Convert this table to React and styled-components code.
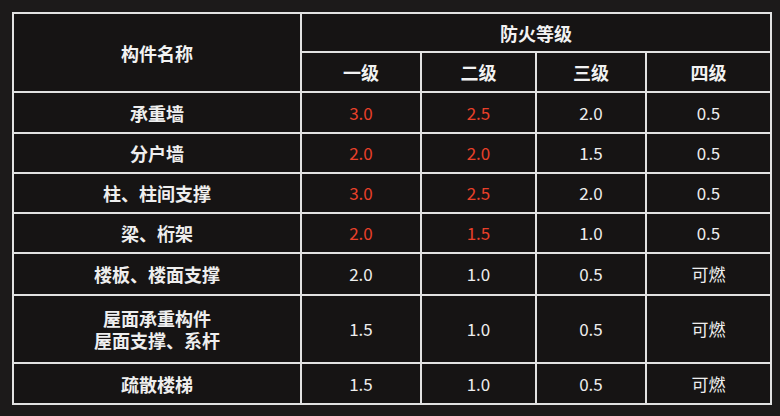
import React from "react";
import styled, { createGlobalStyle } from "styled-components";

const GlobalStyle = createGlobalStyle`
  html, body {
    margin: 0;
    padding: 0;
    background: #1c1a1a;
  }
  body {
    font-family: "Noto Sans CJK SC", "Noto Sans", sans-serif;
    color: #f2f2f2;
  }
`;

const Page = styled.div`
  width: 780px;
  height: 416px;
  box-sizing: border-box;
  padding: 12px 0 0 12px;
  background: #1c1a1a;
  overflow: hidden;
`;

const Table = styled.table`
  border-collapse: collapse;
  table-layout: fixed;
  width: 758px;
  background: #161414;
`;

const Cell = styled.td`
  border: 2px solid #e2e2e2;
  padding: 0;
  text-align: center;
  vertical-align: middle;
  font-size: ${(p) => (p.$bold ? 18 : 17)}px;
  line-height: 22px;
  font-weight: ${(p) => (p.$bold ? 700 : 400)};
  color: ${(p) => (p.$red ? "#e8402a" : "#eeeeee")};
`;

const HeadCell = styled(Cell).attrs({ as: "th", $bold: true })`
  color: #f2f2f2;
`;

const Row = styled.tr`
  height: ${(p) => p.$h}px;
`;

const NameLine = styled.div`
  line-height: 22px;
`;

const rows = [
  { name: ["承重墙"], vals: ["3.0", "2.5", "2.0", "0.5"], red: 2, h: 41 },
  { name: ["分户墙"], vals: ["2.0", "2.0", "1.5", "0.5"], red: 2, h: 40 },
  { name: ["柱、柱间支撑"], vals: ["3.0", "2.5", "2.0", "0.5"], red: 2, h: 40 },
  { name: ["梁、桁架"], vals: ["2.0", "1.5", "1.0", "0.5"], red: 2, h: 40 },
  { name: ["楼板、楼面支撑"], vals: ["2.0", "1.0", "0.5", "可燃"], red: 0, h: 42 },
  { name: ["屋面承重构件", "屋面支撑、系杆"], vals: ["1.5", "1.0", "0.5", "可燃"], red: 0, h: 68 },
  { name: ["疏散楼梯"], vals: ["1.5", "1.0", "0.5", "可燃"], red: 0, h: 41 },
];

export default function App() {
  return (
    <Page>
      <GlobalStyle />
      <Table>
        <colgroup>
          <col style={{ width: 288 }} />
          <col style={{ width: 120 }} />
          <col style={{ width: 115 }} />
          <col style={{ width: 110 }} />
          <col style={{ width: 125 }} />
        </colgroup>
        <thead>
          <Row $h={39}>
            <HeadCell rowSpan={2}>构件名称</HeadCell>
            <HeadCell colSpan={4}>防火等级</HeadCell>
          </Row>
          <Row $h={40}>
            <HeadCell>一级</HeadCell>
            <HeadCell>二级</HeadCell>
            <HeadCell>三级</HeadCell>
            <HeadCell>四级</HeadCell>
          </Row>
        </thead>
        <tbody>
          {rows.map((r, i) => (
            <Row key={i} $h={r.h}>
              <Cell $bold>
                {r.name.map((n, j) => (
                  <NameLine key={j}>{n}</NameLine>
                ))}
              </Cell>
              {r.vals.map((v, j) => (
                <Cell key={j} $red={j < r.red}>
                  {v}
                </Cell>
              ))}
            </Row>
          ))}
        </tbody>
      </Table>
    </Page>
  );
}
